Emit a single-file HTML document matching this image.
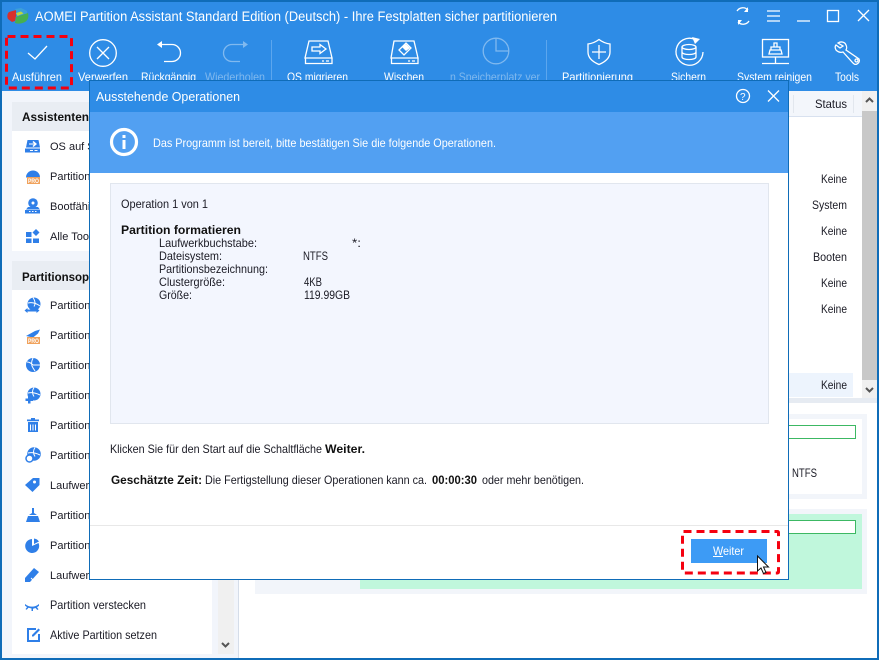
<!DOCTYPE html>
<html><head><meta charset="utf-8"><style>
html,body{margin:0;padding:0;background:#fff;width:879px;height:660px;overflow:hidden}
svg{display:block}
text{font-family:"Liberation Sans",sans-serif;font-size:12px;fill:#1a1a24}
.w{fill:#fff}.l{fill:#7fb8ee}.b{font-weight:bold;fill:#111}
.m{font-size:11px}
.s{fill:none;stroke:#fff;stroke-width:1.3}.d{fill:none;stroke:#80b9ef;stroke-width:1.3}
.i{fill:#2f7fe8}
.c{fill:none;stroke:#fff;stroke-width:1}
.p{font-size:6px;font-weight:bold;fill:#fff}
</style></head><body>
<svg width="879" height="660" viewBox="0 0 879 660" xmlns="http://www.w3.org/2000/svg">
<rect width="879" height="660" fill="#fff"/>
<!-- header -->
<rect width="879" height="91" fill="#2e8ce6"/>
<!-- left area -->
<rect x="0" y="91" width="238" height="569" fill="#f2f5fb"/>
<rect x="12" y="102" width="200" height="29" fill="#e9edf3"/>
<rect x="12" y="131" width="200" height="120" fill="#fff"/>
<rect x="12" y="261" width="200" height="29" fill="#e9edf3"/>
<rect x="12" y="290" width="200" height="364" fill="#fff"/>
<rect x="218" y="91" width="16" height="563" fill="#f0f0f0"/>
<rect x="238" y="91" width="1" height="569" fill="#d5dde9"/>
<path d="M222 643l3.500 3.500 3.500-3.500" fill="none" stroke="#555" stroke-width="2"/>
<text class="b" x="22" y="121" textLength="67" lengthAdjust="spacingAndGlyphs">Assistenten</text>
<text class="b" x="22" y="281" style="font-size:11.500px">Partitionsoperationen</text>
<text class="m" x="50" y="150">OS auf SSD migrieren</text>
<text class="m" x="50" y="180">Partition wiederherstellen</text>
<text class="m" x="50" y="210">Bootfähiges Medium</text>
<text class="m" x="50" y="240">Alle Tools</text>
<text class="m" x="50" y="309">Partition verschieben</text>
<text class="m" x="50" y="339">Partition teilen</text>
<text class="m" x="50" y="369">Partition klonen</text>
<text class="m" x="50" y="399">Partition erstellen</text>
<text class="m" x="50" y="429">Partition löschen</text>
<text class="m" x="50" y="459">Partition formatieren</text>
<text class="m" x="50" y="489">Laufwerk bezeichnen</text>
<text class="m" x="50" y="519">Partition wischen</text>
<text class="m" x="50" y="549">Partition prüfen</text>
<text class="m" x="50" y="579">Laufwerk ändern</text>
<text x="50" y="609" textLength="96" lengthAdjust="spacingAndGlyphs">Partition verstecken</text>
<text x="50" y="639" textLength="107" lengthAdjust="spacingAndGlyphs">Aktive Partition setzen</text>
<!-- left icons -->
<g class="i">
<path d="M27.500 140h11l1.500 7.500H26z"/><rect x="25" y="148.500" width="15" height="4"/>
<path d="M26 177.500a7 7 0 0 1 14 0z"/>
<circle cx="33" cy="203" r="4.800"/><path d="M28 207h10l2 2.500H26z"/><rect x="25" y="210" width="15" height="3.500"/>
<rect x="26" y="232" width="5.500" height="5"/><rect x="26" y="238.500" width="5.500" height="4.500"/><rect x="33" y="238.500" width="6" height="4.500"/><path d="M36 229l3.500 3.500-3.500 3.500-3.500-3.500z"/>
<circle cx="34" cy="304" r="6.500"/><path d="M24.500 310.500l3-2.500v1.500h9V308l3 2.500-3 2.500v-1.500h-9v1.500z"/>
<path d="M26 336l9-5 5-1.500-2 4-5 4z"/>
<circle cx="33" cy="365" r="7"/>
<circle cx="34" cy="394" r="6.500"/><rect x="25.500" y="398.500" width="7.500" height="2.500"/><rect x="28" y="396" width="2.500" height="7.500"/>
<path d="M28 422h10v10H28z"/><rect x="27" y="419.500" width="12" height="1.700"/><rect x="31" y="418" width="4" height="1.500"/>
<circle cx="34" cy="454" r="6.800"/><circle cx="29.500" cy="458.500" r="3.500" fill="#fff" stroke="#2f7fe8" stroke-width="1.500"/>
<path d="M25 485l8-7h6.500v7l-7 7z"/>
<path d="M32 508h2v5l3 2h-8l3-2zM28 516h10l2 6H26z"/>
<path d="M32 539v7l6.500-3a7 7 0 1 1-6.500-4zM34 538.500a7 7 0 0 1 5 3l-5 2.500z"/>
<path d="M25 578l9-10 5 4-9 10h-5z"/>
<path d="M25 604c4 3.500 10 3.500 14 0v1.800l-2 1.500 1.500 2-1.200.7-1.800-2-2.500.7v2.300h-1.500V608.500l-3-.7-1.800 2-1.200-.7 1.500-2-2-1.500z"/>
<path d="M27 628h9v2h-7v10h9v-6h2v8H27z"/><path d="M32 635l6.500-6.500 1.500 1.500-6.500 6.500H32z"/>
</g>
<g>
<path d="M29 143.500h5l-1.500-1.500 1-1 3.500 3-3.500 3-1-1 1.500-1.500h-5z" fill="#fff"/>
<path d="M30 150.500h3M34.500 150.500h3" stroke="#fff" fill="none"/>
<circle cx="33" cy="203" r="1.500" fill="#fff"/>
<path d="M29 211.500h1.500M32 211.500h1.500M35 211.500h1.500" stroke="#fff" fill="none"/>
<path class="c" d="M33 297.500c2 3 3 6 1 9M28 303c4-1 8 0 12 3"/>
<path class="c" d="M33 358c-2 4-2 7 0 10l2 3M33 365h7M27 362c2 0 4 1 6 3"/>
<path class="c" d="M34 387.500c-2 3-2 6 0 9M28 393c4-1 8 0 12 2"/>
<path class="c" d="M30.500 424.500v6M33 424.500v6M35.500 424.500v6"/>
<path class="c" d="M35 447.500c-2 3-2 6 0 9M28 453c4-1 8 0 12 2"/>
<circle cx="34.500" cy="482" r="1.500" fill="#fff"/>
<path class="c" d="M31 578l3 3" />
<rect x="27" y="177" width="13" height="7" fill="#f0a25c"/><text class="p" x="28" y="183" textLength="11" lengthAdjust="spacingAndGlyphs">PRO</text>
<rect x="27" y="337" width="13" height="7" fill="#f0a25c"/><text class="p" x="28" y="343" textLength="11" lengthAdjust="spacingAndGlyphs">PRO</text>
</g>
<!-- right -->
<rect x="239" y="91" width="623" height="25" fill="#f3f6fb"/>
<rect x="239" y="116" width="623" height="1" fill="#d8e1ef"/>
<rect x="793" y="95" width="1" height="18" fill="#e2e7ee"/><rect x="853" y="95" width="1" height="18" fill="#e2e7ee"/>
<text x="815" y="108" textLength="32" lengthAdjust="spacingAndGlyphs">Status</text>
<rect x="862" y="91" width="15" height="307" fill="#f0f0f0"/>
<rect x="862" y="111" width="15" height="269" fill="#c8c8c8"/>
<path d="M866 102l3.500-3.500 3.500 3.500M866 388l3.500 3.500 3.500-3.500" fill="none" stroke="#555" stroke-width="2"/>
<text x="821" y="183" textLength="26" lengthAdjust="spacingAndGlyphs">Keine</text>
<text x="812" y="209" textLength="35" lengthAdjust="spacingAndGlyphs">System</text>
<text x="821" y="235" textLength="26" lengthAdjust="spacingAndGlyphs">Keine</text>
<text x="813" y="261" textLength="34" lengthAdjust="spacingAndGlyphs">Booten</text>
<text x="821" y="287" textLength="26" lengthAdjust="spacingAndGlyphs">Keine</text>
<text x="821" y="313" textLength="26" lengthAdjust="spacingAndGlyphs">Keine</text>
<rect x="239" y="373" width="614" height="24" fill="#edf4fd"/>
<text x="821" y="389" textLength="26" lengthAdjust="spacingAndGlyphs">Keine</text>
<rect x="239" y="398" width="638" height="5" fill="#e6ebf2"/>
<!-- disks -->
<rect x="255" y="414" width="612" height="85" fill="#f2f5fa"/>
<rect x="260" y="419" width="602" height="75" fill="#fff"/>
<rect x="780" y="425.500" width="75.500" height="13" fill="#fff" stroke="#3cb863"/>
<text x="792" y="477" textLength="25" lengthAdjust="spacingAndGlyphs">NTFS</text>
<rect x="255" y="509" width="612" height="85" fill="#f2f5fa"/>
<rect x="360" y="514" width="502" height="75" fill="#c0f7dc"/>
<rect x="780" y="520.500" width="75.500" height="13" fill="#fff" stroke="#3cb863"/>
<!-- window border -->
<rect x="1" y="1" width="877" height="658" fill="none" stroke="#0f6cb8" stroke-width="2"/>
<!-- logo -->
<path d="M16 10L9 12c-2 2-2 5-1 7l4 3 3-1 1-5z" fill="#d8302c"/>
<path d="M15 9l6-1 6 3 0 3-5 1-5-3z" fill="#3ba0d8"/>
<path d="M16 17l6-2 6-2c1 4 0 7-3 9-4 2-7 2-10 1z" fill="#46b050"/>
<path d="M16 13l5-1.500 2.500 2-6 2.500z" fill="#bcd93f"/>
<text class="w" x="35" y="21" textLength="522" lengthAdjust="spacingAndGlyphs" style="font-size:13.500px">AOMEI Partition Assistant Standard Edition (Deutsch) - Ihre Festplatten sicher partitionieren</text>
<!-- title buttons -->
<path class="s" d="M737 11a7 7 0 0 1 11-1M749 21a7 7 0 0 1-11 1" stroke-width="1.500"/>
<path d="M748 7v5h-4zM738 25v-5h4z" fill="#fff"/>
<path class="s" d="M767 11h13M767 16h13M767 21h13M797 21h13M858 10l11 11M869 10l-11 11"/>
<rect class="s" x="827.500" y="10.500" width="11" height="11" stroke-width="1.500"/>
<!-- toolbar labels -->
<text class="w" x="12" y="81" textLength="50" lengthAdjust="spacingAndGlyphs">Ausführen</text>
<text class="w" x="78" y="81" textLength="50" lengthAdjust="spacingAndGlyphs">Verwerfen</text>
<text class="w" x="141" y="81" textLength="55" lengthAdjust="spacingAndGlyphs">Rückgängig</text>
<text class="l" x="205" y="81" textLength="60" lengthAdjust="spacingAndGlyphs">Wiederholen</text>
<text class="w" x="287" y="81" textLength="61" lengthAdjust="spacingAndGlyphs">OS migrieren</text>
<text class="w" x="384" y="81" textLength="40" lengthAdjust="spacingAndGlyphs">Wischen</text>
<text class="l" x="450" y="81" textLength="90" lengthAdjust="spacingAndGlyphs">n Speicherplatz ver</text>
<text class="w" x="562" y="81" textLength="71" lengthAdjust="spacingAndGlyphs">Partitionierung</text>
<text class="w" x="671" y="81" textLength="35" lengthAdjust="spacingAndGlyphs">Sichern</text>
<text class="w" x="737" y="81" textLength="75" lengthAdjust="spacingAndGlyphs">System reinigen</text>
<text class="w" x="835" y="81" textLength="24" lengthAdjust="spacingAndGlyphs">Tools</text>
<!-- toolbar icons -->
<path class="s" d="M28 53l7 6 12-13"/>
<circle class="s" cx="103" cy="53" r="13.300"/><path class="s" d="M97 47l12 12M109 47l-12 12"/>
<path class="s" d="M160 44.500h12a8.500 8.500 0 0 1 0 17h-8"/><path d="M157 44.500l5-3.500v7z" fill="#fff"/>
<path class="d" d="M244 44.500h-12a8.500 8.500 0 0 0 0 17h8"/><path d="M248 44.500l-5-3.500v7z" fill="#80b9ef"/>
<rect x="271" y="40" width="1" height="40" fill="#5ca6ee"/><rect x="546" y="40" width="1" height="40" fill="#5ca6ee"/>
<path class="s" d="M309 41h19l4 17h-27zM305.500 58h26.500v5.500h-26.500z"/><path class="s" d="M312 47h8v-2.500l6 4.500-6 4.500v-2.500h-8z"/><path class="s" d="M322 61h2M326 61h3"/>
<path class="s" d="M394 41h20l4 17h-27zM391.500 58h26.500v5.500h-26.500z"/><path class="s" d="M399 50l7-7 5 5-7 7z"/><path d="M402 47l4-3 4 4-4 3z" fill="#fff"/><path class="s" d="M408 61h2M412 61h3"/>
<circle class="d" cx="496" cy="51" r="12.800"/><path class="d" d="M496 38v13h13"/>
<path class="s" d="M599 39.500c4 3 7 4 11 4.500v8c0 6-5 10-11 12.500-6-2.500-11-6.500-11-12.500v-8c4-.5 7-1.500 11-4.500zM599 45v14M592 52h14"/>
<path class="s" d="M694 39a13.500 13.500 0 1 0 9 13"/><path d="M692 37l8 2-5 5z" fill="#fff"/>
<ellipse class="s" cx="689" cy="47" rx="7" ry="2.500"/><path class="s" d="M682 47v10c0 3.300 14 3.300 14 0V47M682 52c0 3.300 14 3.300 14 0"/>
<rect class="s" x="762.500" y="39.500" width="26" height="17.500"/><path class="s" d="M775.500 57v6M762 63.500h27"/>
<path class="s" d="M774 43h3v4h-3zM771 47h9v3h-9zM770 50h11l1 4h-13z"/>
<path class="s" d="M838 43c3-2 7-1 8 2 1 2 1 3 0 5l13 9c1 2 0 4-2 5s-3 0-4-1l-10-11c-3 1-5 0-7-2-1-2-1-4 0-5l4 3 3-2z"/>
<circle class="s" cx="856.500" cy="60.500" r="1.500"/>
<!-- red box 1 -->
<rect x="6.500" y="36.500" width="65" height="51.500" rx="1" fill="none" stroke="#f5000f" stroke-width="3" stroke-dasharray="8 5"/>
<!-- dialog -->
<rect x="89.500" y="80.500" width="699" height="499" fill="#fff" stroke="#0f6cb8"/>
<rect x="90" y="81" width="698" height="31" fill="#2e8ce6"/>
<rect x="90" y="112" width="698" height="61" fill="#52a0f2"/>
<text class="w" x="96" y="101" textLength="144" lengthAdjust="spacingAndGlyphs" style="font-size:13px">Ausstehende Operationen</text>
<circle class="s" cx="743" cy="96" r="6.500"/><text class="w" x="740" y="100" style="font-size:10px">?</text>
<path class="s" d="M768 90.500l11 11M779 90.500l-11 11"/>
<circle cx="124" cy="142" r="12.500" fill="none" stroke="#fff" stroke-width="3.200"/>
<rect x="122.500" y="140" width="3" height="9" fill="#fff"/><rect x="122.500" y="135" width="3" height="3" fill="#fff"/>
<text class="w" x="153" y="147" textLength="343" lengthAdjust="spacingAndGlyphs">Das Programm ist bereit, bitte bestätigen Sie die folgende Operationen.</text>
<rect x="110.500" y="183.500" width="658" height="240" fill="#f3f6fe" stroke="#e1e6ee"/>
<text x="121" y="208" textLength="87" lengthAdjust="spacingAndGlyphs">Operation 1 von 1</text>
<text class="b" x="121" y="234" textLength="120" lengthAdjust="spacingAndGlyphs">Partition formatieren</text>
<text x="159" y="247" textLength="98" lengthAdjust="spacingAndGlyphs">Laufwerkbuchstabe:</text>
<text x="352" y="247" textLength="9" lengthAdjust="spacingAndGlyphs">*:</text>
<text x="159" y="260" textLength="63" lengthAdjust="spacingAndGlyphs">Dateisystem:</text>
<text x="303" y="260" textLength="25" lengthAdjust="spacingAndGlyphs">NTFS</text>
<text x="159" y="273" textLength="109" lengthAdjust="spacingAndGlyphs">Partitionsbezeichnung:</text>
<text x="159" y="286" textLength="66" lengthAdjust="spacingAndGlyphs">Clustergröße:</text>
<text x="304" y="286" textLength="18" lengthAdjust="spacingAndGlyphs">4KB</text>
<text x="159" y="299" textLength="33" lengthAdjust="spacingAndGlyphs">Größe:</text>
<text x="304" y="299" textLength="46" lengthAdjust="spacingAndGlyphs">119.99GB</text>
<text x="110" y="453" textLength="212" lengthAdjust="spacingAndGlyphs">Klicken Sie für den Start auf die Schaltfläche</text>
<text class="b" x="325" y="453" textLength="40" lengthAdjust="spacingAndGlyphs">Weiter.</text>
<text class="b" x="111" y="484" textLength="91" lengthAdjust="spacingAndGlyphs">Geschätzte Zeit:</text>
<text x="205" y="484" textLength="222" lengthAdjust="spacingAndGlyphs">Die Fertigstellung dieser Operationen kann ca.</text>
<text class="b" x="432" y="484" textLength="45" lengthAdjust="spacingAndGlyphs">00:00:30</text>
<text x="482" y="484" textLength="102" lengthAdjust="spacingAndGlyphs">oder mehr benötigen.</text>
<rect x="90" y="525" width="698" height="1" fill="#e8e8e8"/>
<rect x="691" y="539" width="76" height="24" fill="#3d9bf5"/>
<text class="w" x="713" y="555" textLength="31" lengthAdjust="spacingAndGlyphs">Weiter</text>
<rect x="713" y="556" width="10" height="1" fill="#fff"/>
<rect x="682.500" y="531.500" width="96" height="41.500" rx="1" fill="none" stroke="#f5000f" stroke-width="3" stroke-dasharray="8 5"/>
<path d="M757.500 556v15l3.500-3 2.500 5.500 2.500-1-2.500-5.500h5z" fill="#fff" stroke="#111" stroke-width="1"/>
</svg>
</body></html>
